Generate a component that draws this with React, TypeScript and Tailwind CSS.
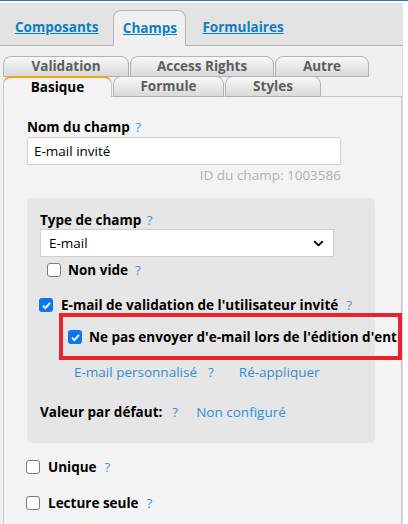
import { ChevronDown } from "lucide-react";

const font = { fontFamily: '"Open Sans", "Liberation Sans", sans-serif' };

function Help({ className = "" }: { className?: string }) {
  return <span className={`font-normal text-[#3d95d8] ${className}`}>?</span>;
}

function Box({ checked = false }: { checked?: boolean }) {
  return checked ? (
    <span className="w-[14px] h-[14px] shrink-0 rounded-[3px] bg-[#0b76f2] flex items-center justify-center">
      <svg viewBox="0 0 12 12" className="w-[11px] h-[11px]">
        <polyline points="2.2,6.3 4.8,8.8 9.8,3.2" fill="none" stroke="white" strokeWidth="2" />
      </svg>
    </span>
  ) : (
    <span className="w-[14px] h-[14px] shrink-0 rounded-[3px] bg-white border border-[#7a7a7a]" />
  );
}

function SubTab({ label, w, active = false }: { label: string; w: string; active?: boolean }) {
  if (active) {
    return (
      <div
        className={`${w} h-[21px] -mb-px relative z-10 rounded-t-[8px] border border-[#c9c9c9] border-b-0 border-t-2 border-t-[#f4a21d] bg-[#f4f4f4] flex items-center justify-center text-[13.5px] font-bold text-black leading-none`}
      >
        {label}
      </div>
    );
  }
  return (
    <div
      className={`${w} h-[21px] rounded-t-[8px] border border-[#b3b3b3] bg-gradient-to-b from-[#f8f8f8] to-[#d9d9d9] flex items-center justify-center text-[13.5px] font-bold text-[#5d5d5d] leading-none`}
    >
      {label}
    </div>
  );
}

export default function App() {
  return (
    <div className="w-[408px] h-[524px] overflow-hidden bg-white relative" style={font}>
      <div className="h-px bg-[#2f6fd0]" />
      <div className="h-[2px]" />

      {/* Onglets principaux */}
      <div className="w-[403px] h-[43px] bg-[#e3e3e3] border-b border-[#b4b4b4] flex items-end pl-[15px]">
        <a className="h-[36px] flex items-center text-[13.5px] font-bold text-[#0b7ec6] underline">Composants</a>
        <div className="ml-[15px] h-[36px] -mb-px w-[73px] rounded-t-[8px] border border-[#b8b8b8] border-b-0 bg-[#f0f0f0] flex items-center justify-center">
          <a className="text-[13.5px] font-bold text-[#0b7ec6] underline">Champs</a>
        </div>
        <a className="ml-[16px] h-[36px] flex items-center text-[13.5px] font-bold text-[#0b7ec6] underline">Formulaires</a>
      </div>

      <div className="flex">
        <div className="w-[403px] h-[478px] bg-[#f0f0f0] border-r border-[#dcdcdc] pt-[10px] pl-[3px]">
          <div className="flex gap-px">
            <SubTab label="Validation" w="w-[126px]" />
            <SubTab label="Access Rights" w="w-[144px]" />
            <SubTab label="Autre" w="w-[94px]" />
          </div>
          <div className="flex gap-px -mt-px">
            <SubTab label="Basique" w="w-[109px]" active />
            <SubTab label="Formule" w="w-[111px]" />
            <SubTab label="Styles" w="w-[96px]" />
          </div>

          {/* Panneau */}
          <div className="w-[399px] h-[440px] -mt-px bg-[#f3f3f3] border border-[#c8c8c8] overflow-hidden pl-[23px] pt-[21px] text-[13.5px] text-black">
            <div className="font-bold leading-[19px]">
              Nom du champ <Help className="ml-0.5" />
            </div>
            <div className="w-[314px] h-[28px] bg-white border border-[#cfcfcf] rounded-[2px] flex items-center pl-[6px]">
              E-mail invité
            </div>
            <div className="w-[314px] text-right text-[13.5px] text-[#b2b2b2] leading-[18px] mt-px">
              ID du champ: 1003586
            </div>

            {/* Type de champ */}
            <div className="mt-[14px] w-[348px] bg-[#e6e6e6] rounded-[5px] pl-[13px] pt-[13px] pb-[18px]">
              <div className="font-bold leading-[18px]">
                Type de champ <Help className="ml-0.5" />
              </div>
              <div className="w-[294px] h-[28px] bg-white border border-[#cfcfcf] flex items-center justify-between pl-[8px] pr-[7px]">
                <span>E-mail</span>
                <ChevronDown className="w-[15px] h-[15px] text-black" strokeWidth={3} />
              </div>
              <div className="h-[26px] flex items-center pl-[7px] gap-[7px]">
                <Box />
                <span className="font-bold">Non vide</span>
                <Help />
              </div>
              <div className="mt-[9px] h-[26px] flex items-center gap-[8px] -ml-px">
                <Box checked />
                <span className="font-bold whitespace-nowrap">E-mail de validation de l'utilisateur invité</span>
                <Help />
              </div>
              <div className="mt-[6px] h-[26px] flex items-center pl-[28px] gap-[7px] whitespace-nowrap">
                <Box checked />
                <span className="font-bold">Ne pas envoyer d'e-mail lors de l'édition d'entrées</span>
              </div>
              <div className="mt-[9px] h-[26px] flex items-center pl-[34px] text-[#2f8fd6]">
                <span>E-mail personnalisé</span>
                <span className="ml-[11px]">?</span>
                <span className="ml-[25px]">Ré-appliquer</span>
              </div>
              <div className="mt-[14px] h-[26px] flex items-center">
                <span className="font-bold">Valeur par défaut:</span>
                <span className="ml-[10px] text-[#2f8fd6]">?</span>
                <span className="ml-[18px] text-[#2f8fd6]">Non configuré</span>
              </div>
            </div>

            <div className="mt-[11px] h-[26px] flex items-center gap-[8px] -ml-px">
              <Box />
              <span className="font-bold">Unique</span>
              <Help />
            </div>
            <div className="mt-[10px] h-[26px] flex items-center gap-[8px] -ml-px">
              <Box />
              <span className="font-bold">Lecture seule</span>
              <Help />
            </div>
          </div>
        </div>
      </div>

      {/* Cadre rouge d'annotation */}
      <div className="absolute left-[59px] top-[313px] w-[343px] h-[47px] border-4 border-[#e8232c] pointer-events-none" />
    </div>
  );
}
